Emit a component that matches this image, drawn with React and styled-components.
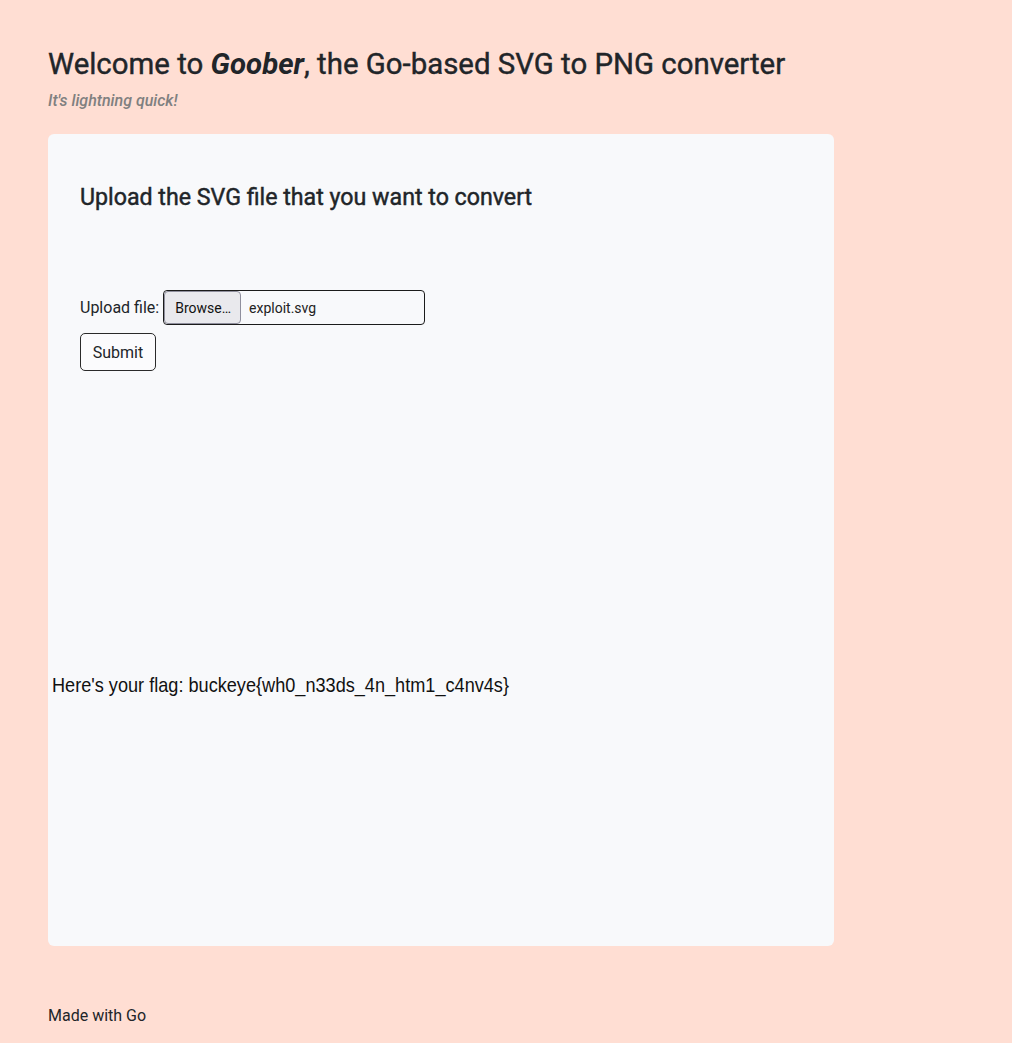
import React from 'react';
import styled, { createGlobalStyle } from 'styled-components';

const GlobalStyle = createGlobalStyle`
  html, body {
    margin: 0;
    padding: 0;
    background: #ffded3;
  }
  body {
    font-family: Roboto, "Liberation Sans", sans-serif;
    color: #212529;
  }
`;

const Page = styled.main`
  padding: 44px 48px 0 48px;
  width: 786px;
`;

const Title = styled.h1`
  margin: 0;
  font-size: 29.4px;
  font-weight: 400;
  line-height: 40px;
  color: #212529;
  -webkit-text-stroke: 0.4px #212529;

  em {
    font-weight: 700;
    -webkit-text-stroke: 0;
  }
`;

const Tagline = styled.p`
  margin: 5px 0 21px 0;
  font-size: 16px;
  font-style: italic;
  font-weight: 500;
  line-height: 24px;
  color: #808080;
`;

const Card = styled.section`
  background: #f8f9fb;
  border-radius: 6px;
  padding: 41px 32px 0 32px;
  height: 812px;
  box-sizing: border-box;
`;

const CardTitle = styled.h2`
  margin: 0 0 71px 0;
  font-size: 23.2px;
  font-weight: 400;
  line-height: 44px;
  -webkit-text-stroke: 0.45px #212529;
`;

const FormRow = styled.div`
  display: flex;
  align-items: center;
  gap: 4px;
  font-size: 16px;
`;

const FileBox = styled.div`
  display: flex;
  align-items: center;
  width: 262px;
  height: 35px;
  box-sizing: border-box;
  border: 1px solid #1b1b1b;
  border-radius: 4px;
  overflow: hidden;
`;

const Browse = styled.span`
  display: flex;
  align-items: center;
  height: 100%;
  padding: 0 9px 0 10px;
  background: #e9e9ed;
  border: 1px solid #8f8f9d;
  border-radius: 4px;
  box-sizing: border-box;
  font-size: 14px;
  color: #111;
`;

const FileName = styled.span`
  padding-left: 8px;
  font-size: 14px;
  color: #222;
`;

const SubmitButton = styled.button`
  display: block;
  margin-top: 8px;
  width: 76px;
  height: 38px;
  border: 1px solid #2a2a2a;
  border-radius: 5px;
  background: #fbfbfd;
  font-family: Roboto, sans-serif;
  font-size: 16px;
  color: #212529;
`;

const FlagCanvas = styled.svg`
  display: block;
  margin: 0 -32px;
  width: 786px;
  height: 573px;
`;

const Footer = styled.footer`
  margin-top: 58px;
  font-size: 16px;
  line-height: 24px;
`;

export default function App() {
  return (
    <>
      <GlobalStyle />
      <Page>
        <Title>
          Welcome to <em>Goober</em>, the Go-based SVG to PNG converter
        </Title>
        <Tagline>It's lightning quick!</Tagline>
        <Card>
          <CardTitle>Upload the SVG file that you want to convert</CardTitle>
          <FormRow>
            <span>Upload file:</span>
            <FileBox>
              <Browse>Browse…</Browse>
              <FileName>exploit.svg</FileName>
            </FileBox>
          </FormRow>
          <SubmitButton>Submit</SubmitButton>
          <FlagCanvas viewBox="0 0 786 573">
            <text
              x="4"
              y="321"
              fontFamily="'Liberation Sans', Arial, sans-serif"
              fontSize="21"
              fill="#111"
              textLength="457"
              lengthAdjust="spacingAndGlyphs"
            >
              Here's your flag: buckeye{'{'}wh0_n33ds_4n_htm1_c4nv4s{'}'}
            </text>
          </FlagCanvas>
        </Card>
        <Footer>Made with Go</Footer>
      </Page>
    </>
  );
}
